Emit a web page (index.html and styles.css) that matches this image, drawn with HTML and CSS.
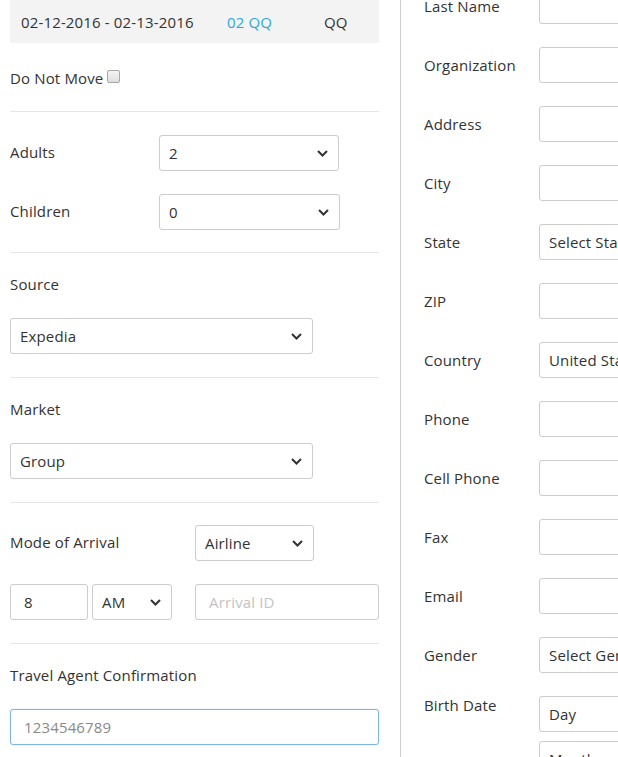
FILE: index.html
```html
<!DOCTYPE html>
<html>
<head>
<meta charset="utf-8">
<link rel="stylesheet" href="styles.css">
</head>
<body>
<div class="page">
  <div class="left">
    <div class="stay-bar">
      <span class="dates">02-12-2016 - 02-13-2016</span>
      <span class="room">02 QQ</span>
      <span class="type">QQ</span>
    </div>
    <div class="section first">
      <div class="dnm">Do Not Move <span class="checkbox"></span></div>
    </div>
    <div class="section pb22">
      <div class="row">
        <span class="lbl rowlbl w149">Adults</span>
        <div class="select w180"><span>2</span><svg class="chev" width="11" height="7" viewBox="0 0 11 7"><path d="M1 1 L5.5 5.5 L10 1" fill="none" stroke="#333" stroke-width="2"/></svg></div>
      </div>
      <div class="row">
        <span class="lbl rowlbl w149">Children</span>
        <div class="select w181"><span>0</span><svg class="chev" width="11" height="7" viewBox="0 0 11 7"><path d="M1 1 L5.5 5.5 L10 1" fill="none" stroke="#333" stroke-width="2"/></svg></div>
      </div>
    </div>
    <div class="section">
      <span class="lbl blk">Source</span>
      <div class="select w303"><span>Expedia</span><svg class="chev" width="11" height="7" viewBox="0 0 11 7"><path d="M1 1 L5.5 5.5 L10 1" fill="none" stroke="#333" stroke-width="2"/></svg></div>
    </div>
    <div class="section">
      <span class="lbl blk">Market</span>
      <div class="select w303"><span>Group</span><svg class="chev" width="11" height="7" viewBox="0 0 11 7"><path d="M1 1 L5.5 5.5 L10 1" fill="none" stroke="#333" stroke-width="2"/></svg></div>
    </div>
    <div class="section pt22">
      <div class="row">
        <span class="lbl rowlbl w185">Mode of Arrival</span>
        <div class="select w119"><span>Airline</span><svg class="chev" width="11" height="7" viewBox="0 0 11 7"><path d="M1 1 L5.5 5.5 L10 1" fill="none" stroke="#333" stroke-width="2"/></svg></div>
      </div>
      <div class="row">
        <div class="input w78"><span>8</span></div>
        <div class="select w80 ml4"><span>AM</span><svg class="chev" width="11" height="7" viewBox="0 0 11 7"><path d="M1 1 L5.5 5.5 L10 1" fill="none" stroke="#333" stroke-width="2"/></svg></div>
        <div class="input w184 ml23"><span class="ph">Arrival ID</span></div>
      </div>
    </div>
    <div class="section last">
      <span class="lbl blk">Travel Agent Confirmation</span>
      <div class="input focus w369"><span class="val">1234546789</span></div>
    </div>
  </div>
  <div class="right">
    <div class="frow"><span class="rl">Last Name</span><div class="rin"></div></div>
    <div class="frow"><span class="rl">Organization</span><div class="rin"></div></div>
    <div class="frow"><span class="rl">Address</span><div class="rin"></div></div>
    <div class="frow"><span class="rl">City</span><div class="rin"></div></div>
    <div class="frow"><span class="rl">State</span><div class="rin"><span>Select State</span></div></div>
    <div class="frow"><span class="rl">ZIP</span><div class="rin"></div></div>
    <div class="frow"><span class="rl">Country</span><div class="rin"><span>United States</span></div></div>
    <div class="frow"><span class="rl">Phone</span><div class="rin"></div></div>
    <div class="frow"><span class="rl">Cell Phone</span><div class="rin"></div></div>
    <div class="frow"><span class="rl">Fax</span><div class="rin"></div></div>
    <div class="frow"><span class="rl">Email</span><div class="rin"></div></div>
    <div class="frow"><span class="rl">Gender</span><div class="rin"><span>Select Gender</span></div></div>
    <div class="frow top"><span class="rl">Birth Date</span>
      <div class="stack">
        <div class="rin"><span>Day</span></div>
        <div class="rin"><span>Month</span></div>
      </div>
    </div>
  </div>
</div>
</body>
</html>
```

FILE: styles.css
```css
html, body {
  margin: 0;
  padding: 0;
  height: 757px;
  overflow: hidden;
  background: #fff;
}
body {
  font-family: "Open Sans", "Noto Sans", sans-serif;
  font-size: 15px;
  letter-spacing: 0.15px;
  color: #333;
}
.page {
  display: flex;
  align-items: flex-start;
  height: 757px;
  overflow: hidden;
}
.left {
  width: 401px;
  box-sizing: border-box;
  padding: 0 21px 0 10px;
  border-right: 1px solid #ccc;
  height: 757px;
  flex: none;
}
.stay-bar {
  height: 43px;
  background: #f3f3f3;
  display: flex;
  align-items: center;
  padding-left: 11px;
}
.dates { width: 206px; }
.room { width: 97px; color: #2ea8d8; }
.type { color: #333; }

.section {
  display: flex;
  flex-direction: column;
  gap: 23px;
  padding: 23px 0 23px;
  border-bottom: 1px solid #e6e6e6;
}
.section.first {
  padding: 25px 0 23px;
}
.section.pb22 { padding-bottom: 22px; }
.section.pt22 { padding-top: 22px; }
.section.last {
  border-bottom: none;
  padding-top: 23px;
}
.lbl {
  line-height: 20px;
  display: block;
}
.lbl.blk {
  margin-top: -2px;
  margin-bottom: 1px;
}
.lbl.rowlbl {
  padding-bottom: 2px;
}
.dnm {
  line-height: 20px;
  display: flex;
  align-items: center;
}
.checkbox {
  display: inline-block;
  width: 11px;
  height: 11px;
  border: 1px solid #a8a8a8;
  border-radius: 2px;
  background: linear-gradient(#f4f4f4, #dedede);
  margin-left: 4px;
  margin-bottom: 4px;
}
.row {
  display: flex;
  align-items: center;
}
.w149 { width: 149px; flex: none; }
.w185 { width: 185px; flex: none; }
.select, .input {
  height: 36px;
  box-sizing: border-box;
  border: 1px solid #ccc;
  border-radius: 3px;
  display: flex;
  align-items: center;
  justify-content: space-between;
  padding: 0 10px 0 9px;
  background: #fff;
  flex: none;
}
.input { padding-left: 13px; }
.chev { display: block; }
.w180 { width: 180px; }
.w181 { width: 181px; }
.w303 { width: 303px; }
.w119 { width: 119px; }
.w78 { width: 78px; }
.w80 { width: 80px; }
.w184 { width: 184px; }
.w369 { width: 369px; }
.ml4 { margin-left: 4px; }
.ml23 { margin-left: 23px; }
.ph { color: #c4c4c4; }
.val { color: #8a8a8a; }
.input.focus {
  border-color: #7fb6e6;
  box-shadow: 0 0 2px rgba(102, 175, 233, 0.35);
}

.right {
  flex: none;
  padding-left: 23px;
  margin-top: -12px;
  display: flex;
  flex-direction: column;
  gap: 23px;
}
.frow {
  display: flex;
  align-items: center;
}
.frow.top {
  align-items: flex-start;
}
.rl {
  width: 115px;
  flex: none;
  line-height: 20px;
}
.frow.top .rl {
  margin-top: -1px;
}
.rin {
  width: 200px;
  height: 36px;
  box-sizing: border-box;
  border: 1px solid #ccc;
  border-radius: 3px;
  display: flex;
  align-items: center;
  padding-left: 9px;
  white-space: nowrap;
  overflow: hidden;
}
.stack {
  display: flex;
  flex-direction: column;
  gap: 9px;
}
```
